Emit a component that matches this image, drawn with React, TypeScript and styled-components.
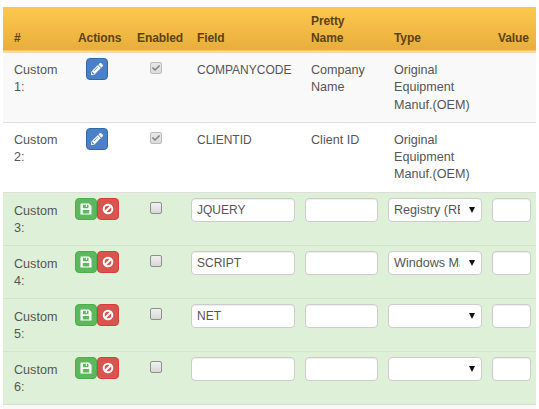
import styled, { createGlobalStyle } from 'styled-components';
import { FaCheck, FaPencilAlt } from 'react-icons/fa';

const GlobalStyle = createGlobalStyle`
  html, body {
    margin: 0;
    background: #fff;
    overflow: hidden;
  }
  body {
    font-family: "Liberation Sans", Arial, sans-serif;
    font-size: 12.6px;
    line-height: 17.3px;
    color: #555;
  }
`;

const Page = styled.div`
  padding: 7px 3px 0;
  width: 533px;
`;

const Table = styled.table`
  width: 533px;
  table-layout: fixed;
  border-collapse: collapse;
`;

const HeadRow = styled.tr`
  background: linear-gradient(to bottom, #fec84f, #e8ae3b);
  border-bottom: 2px solid #ecdcb8;
`;

const Th = styled.th`
  padding: 0 12px 4px 11px;
  height: 45px;
  box-sizing: border-box;
  vertical-align: bottom;
  text-align: left;
  font-size: 12px;
  font-weight: bold;
  letter-spacing: -0.1px;
  line-height: 17px;
  color: #5c4310;
`;

const Row = styled.tr<{ $tone: 'odd' | 'even' | 'edit' }>`
  background: ${({ $tone }) =>
    $tone === 'odd' ? '#f9f9f9' : $tone === 'edit' ? '#dff0d8' : '#fff'};
  height: ${({ $tone }) => ($tone === 'edit' ? '53px' : 'auto')};
  border-bottom: 1px solid ${({ $tone }) => ($tone === 'edit' ? '#d5e2cf' : '#ddd')};
`;

const Td = styled.td<{ $caps?: boolean }>`
  padding: 9px 6px 8px 11px;
  vertical-align: top;
  font-size: ${({ $caps }) => ($caps ? '12px' : '12.6px')};
`;

const EditNameTd = styled(Td)`
  padding: 10px 6px 7px 11px;
`;

const ControlTd = styled.td<{ $center?: boolean }>`
  padding: 5px;
  vertical-align: top;
  text-align: ${({ $center }) => ($center ? 'center' : 'left')};
`;

const TailRow = styled.tr`
  background: #f9f9f9;
  height: 6px;
`;

const ButtonGroup = styled.div`
  display: flex;
  justify-content: center;
`;

const IconButton = styled.button<{ $kind: 'edit' | 'save' | 'cancel' }>`
  width: 22px;
  height: 22px;
  padding: 0;
  display: grid;
  place-items: center;
  border-radius: 4px;
  border: 1px solid
    ${({ $kind }) =>
      $kind === 'edit' ? '#2f6aa5' : $kind === 'save' ? '#4cae4c' : '#d43f3a'};
  background: ${({ $kind }) =>
    $kind === 'edit' ? '#4a80c8' : $kind === 'save' ? '#5cb85c' : '#d9534f'};
  color: #fff;
  font-size: 12px;
`;

const Check = styled.span`
  width: 12px;
  height: 12px;
  margin-top: 4px;
  display: inline-grid;
  place-items: center;
  box-sizing: border-box;
  border: 1px solid #bbb;
  border-radius: 2px;
  background: linear-gradient(to bottom, #e8e8e8, #dcdcdc);
  color: #808080;
  font-size: 8px;
  vertical-align: top;
`;

const EmptyCheck = styled(Check)`
  border-color: #8f8f8f;
  background: linear-gradient(to bottom, #f0f0f0, #d8d8d8);
`;

const Input = styled.input`
  display: block;
  width: 100%;
  height: 24px;
  box-sizing: border-box;
  padding: 1px 5px 0;
  border: 1px solid #ccc;
  border-radius: 4px;
  background: #fff;
  box-shadow: inset 0 1px 1px rgba(0, 0, 0, 0.075);
  font: 12px "Liberation Sans", Arial, sans-serif;
  color: #555;
`;

const SelectWrap = styled.div`
  position: relative;

  &::after {
    content: '';
    position: absolute;
    top: 9px;
    right: 7px;
    border-left: 3.5px solid transparent;
    border-right: 3.5px solid transparent;
    border-top: 6px solid #111;
    pointer-events: none;
  }
`;

const Select = styled.select`
  display: block;
  width: 100%;
  height: 24px;
  box-sizing: border-box;
  padding: 1px 21px 0 5px;
  appearance: none;
  border: 1px solid #ccc;
  border-radius: 4px;
  background: #fff;
  font: 12.6px "Liberation Sans", Arial, sans-serif;
  color: #555;
`;

const SaveIcon = () => (
  <svg width="12" height="12" viewBox="0 0 12 12" aria-hidden="true">
    <path
      fill="currentColor"
      fillRule="evenodd"
      d="M1 .5h8L11.500 3v8.500H.5V1zM3 1.800v3.400h5.500V1.800H7v2.300H5.800V1.800zM2.800 7v3.400h6.400V7z"
    />
  </svg>
);

const BanIcon = () => (
  <svg width="12" height="12" viewBox="0 0 12 12" aria-hidden="true">
    <circle cx="6" cy="6" r="4.300" fill="none" stroke="currentColor" strokeWidth="2" />
    <path d="M3 9l6-6" stroke="currentColor" strokeWidth="2" />
  </svg>
);

const columns = [
  { label: '#', width: 64 },
  { label: 'Actions', width: 59 },
  { label: 'Enabled', width: 60 },
  { label: 'Field', width: 114 },
  { label: 'Pretty Name', width: 83 },
  { label: 'Type', width: 104 },
  { label: 'Value', width: 49 },
];

const savedRows = [
  { name: 'Custom 1:', field: 'COMPANYCODE', pretty: 'Company Name', tone: 'odd' as const },
  { name: 'Custom 2:', field: 'CLIENTID', pretty: 'Client ID', tone: 'even' as const },
];

const editRows = [
  { name: 'Custom 3:', field: 'JQUERY', type: 'Registry (REG)' },
  { name: 'Custom 4:', field: 'SCRIPT', type: 'Windows Management' },
  { name: 'Custom 5:', field: 'NET', type: '' },
  { name: 'Custom 6:', field: '', type: '' },
];

export default function App() {
  return (
    <Page>
      <GlobalStyle />
      <Table>
        <colgroup>
          {columns.map((c) => (
            <col key={c.label} width={c.width} />
          ))}
        </colgroup>
        <thead>
          <HeadRow>
            {columns.map((c) => (
              <Th key={c.label}>{c.label}</Th>
            ))}
          </HeadRow>
        </thead>
        <tbody>
          {savedRows.map((r) => (
            <Row key={r.name} $tone={r.tone}>
              <Td>{r.name}</Td>
              <ControlTd $center>
                <ButtonGroup>
                  <IconButton $kind="edit" aria-label="Edit">
                    <FaPencilAlt />
                  </IconButton>
                </ButtonGroup>
              </ControlTd>
              <ControlTd $center>
                <Check>
                  <FaCheck />
                </Check>
              </ControlTd>
              <Td $caps>{r.field}</Td>
              <Td>{r.pretty}</Td>
              <Td>Original Equipment Manuf.(OEM)</Td>
              <Td />
            </Row>
          ))}
          {editRows.map((r) => (
            <Row key={r.name} $tone="edit">
              <EditNameTd>{r.name}</EditNameTd>
              <ControlTd $center>
                <ButtonGroup>
                  <IconButton $kind="save" aria-label="Save">
                    <SaveIcon />
                  </IconButton>
                  <IconButton $kind="cancel" aria-label="Cancel">
                    <BanIcon />
                  </IconButton>
                </ButtonGroup>
              </ControlTd>
              <ControlTd $center>
                <EmptyCheck />
              </ControlTd>
              <ControlTd>
                <Input defaultValue={r.field} />
              </ControlTd>
              <ControlTd>
                <Input />
              </ControlTd>
              <ControlTd>
                <SelectWrap>
                  <Select defaultValue={r.type}>
                    <option value="">{''}</option>
                    <option>Registry (REG)</option>
                    <option>Windows Management</option>
                  </Select>
                </SelectWrap>
              </ControlTd>
              <ControlTd>
                <Input />
              </ControlTd>
            </Row>
          ))}
          <TailRow>
            <td colSpan={7} />
          </TailRow>
        </tbody>
      </Table>
    </Page>
  );
}
